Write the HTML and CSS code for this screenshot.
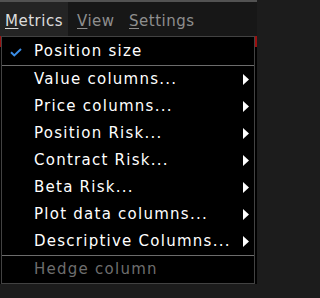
FILE: index.html
```html
<!DOCTYPE html>
<html>
<head>
<meta charset="utf-8">
<link rel="stylesheet" href="styles.css">
</head>
<body>
<div class="topband"></div>
<nav class="menubar">
  <div class="mb-item mb-metrics active"><u>M</u>etrics</div>
  <div class="mb-item mb-view"><u>V</u>iew</div>
  <div class="mb-item mb-settings"><u>S</u>ettings</div>
</nav>
<div class="backdrop">
  <div class="backdrop-header"></div>
</div>

<div class="menu">
  <div class="row checked">
    <svg class="check" width="12" height="9" viewBox="0 0 12 9"><path d="M1 4.2 L4.3 7.4 L11 1" fill="none" stroke="#3a8ee8" stroke-width="2"/></svg>
    <span class="label">Position size</span>
  </div>
  <div class="sep"></div>
  <div class="row sub"><span class="label">Value columns...</span><svg class="arrow" width="6" height="11" viewBox="0 0 6 11"><path d="M0 0 L6 5.5 L0 11 Z" fill="#fff"/></svg></div>
  <div class="row sub"><span class="label">Price columns...</span><svg class="arrow" width="6" height="11" viewBox="0 0 6 11"><path d="M0 0 L6 5.5 L0 11 Z" fill="#fff"/></svg></div>
  <div class="row sub"><span class="label">Position Risk...</span><svg class="arrow" width="6" height="11" viewBox="0 0 6 11"><path d="M0 0 L6 5.5 L0 11 Z" fill="#fff"/></svg></div>
  <div class="row sub"><span class="label">Contract Risk...</span><svg class="arrow" width="6" height="11" viewBox="0 0 6 11"><path d="M0 0 L6 5.5 L0 11 Z" fill="#fff"/></svg></div>
  <div class="row sub"><span class="label">Beta Risk...</span><svg class="arrow" width="6" height="11" viewBox="0 0 6 11"><path d="M0 0 L6 5.5 L0 11 Z" fill="#fff"/></svg></div>
  <div class="row sub"><span class="label">Plot data columns...</span><svg class="arrow" width="6" height="11" viewBox="0 0 6 11"><path d="M0 0 L6 5.5 L0 11 Z" fill="#fff"/></svg></div>
  <div class="row sub"><span class="label">Descriptive Columns...</span><svg class="arrow" width="6" height="11" viewBox="0 0 6 11"><path d="M0 0 L6 5.5 L0 11 Z" fill="#fff"/></svg></div>
  <div class="sep"></div>
  <div class="row disabled"><span class="label">Hedge column</span></div>
</div>
</body>
</html>
```

FILE: styles.css
```css
html, body {
  margin: 0;
  padding: 0;
}
body {
  width: 257px;
  height: 298px;
  background: #1c1c1c;
  font-family: "DejaVu Sans", Verdana, sans-serif;
  font-size: 15px;
  overflow: hidden;
  position: relative;
}
.topband {
  height: 2px;
  background: #525252;
}
.menubar {
  display: flex;
  height: 34px;
  background: #171717;
}
.mb-item {
  box-sizing: border-box;
  height: 34px;
  padding-top: 4px;
  line-height: 30px;
  letter-spacing: 0.5px;
  color: #8e8e8e;
  white-space: nowrap;
}
.mb-item u {
  text-underline-offset: 2px;
  text-decoration-thickness: 1px;
}
.mb-metrics {
  width: 68px;
  padding-left: 5px;
}
.mb-view {
  width: 52px;
  padding-left: 9px;
}
.mb-settings {
  padding-left: 9px;
}
.mb-item.active {
  background: #242424;
  color: #dcdcdc;
}
.backdrop {
  height: 248px;
  background: #000;
}
.backdrop-header {
  height: 11px;
  background: #9c1010;
}
.menu {
  position: absolute;
  left: 1px;
  top: 36px;
  width: 254px;
  height: 248px;
  box-sizing: border-box;
  border: 1px solid #424242;
  background: #000;
  padding-top: 1px;
}
.row {
  position: relative;
  height: 27px;
  line-height: 27px;
  padding-left: 32px;
  color: #fff;
  letter-spacing: 1.25px;
  white-space: nowrap;
}
.row.disabled {
  color: #6e6e6e;
}
.check {
  position: absolute;
  left: 8px;
  top: 10px;
}
.arrow {
  position: absolute;
  left: 241px;
  top: 8px;
}
.sep {
  height: 1px;
  background: #6c6c6c;
}
```
